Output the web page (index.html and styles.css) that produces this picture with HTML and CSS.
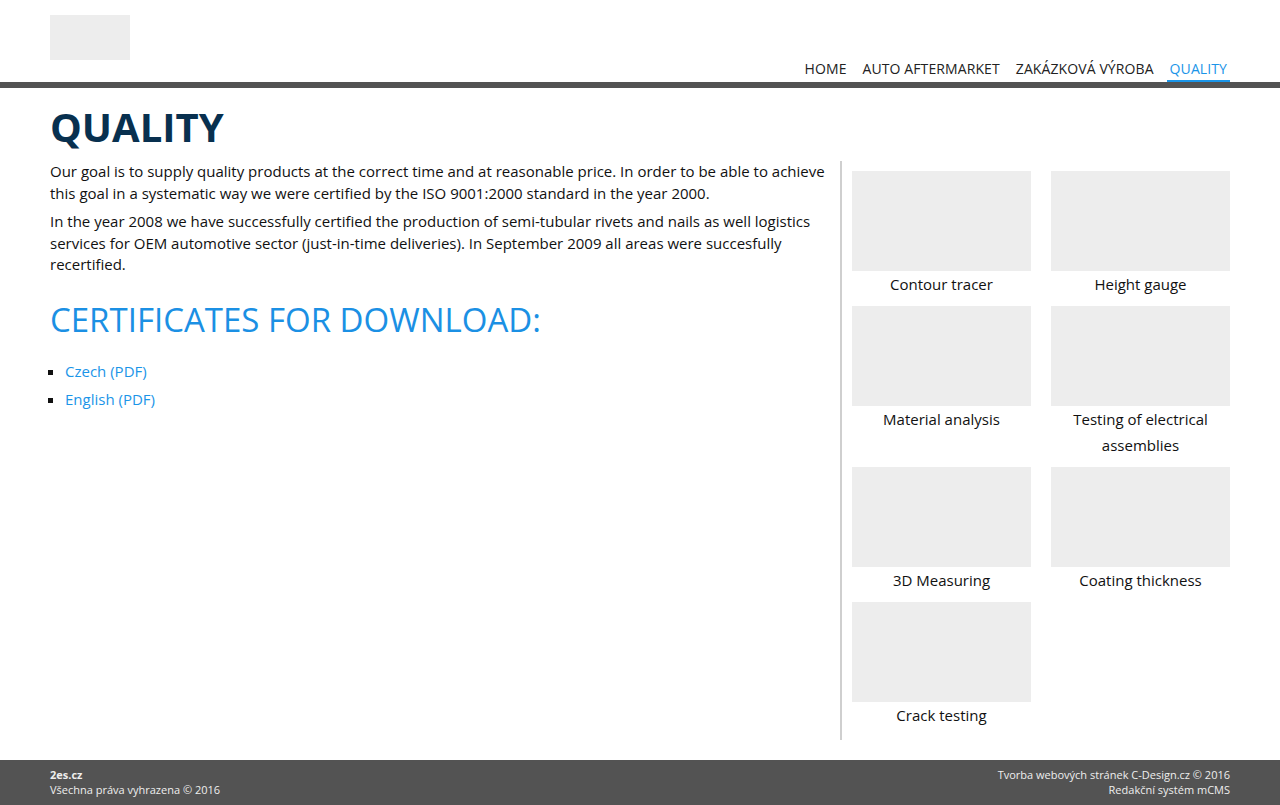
FILE: index.html
```html
<!DOCTYPE html>
<html lang="cs">
<head>
<meta charset="utf-8">
<title>Quality</title>
<link rel="stylesheet" href="styles.css">
</head>
<body>
<header class="header">
  <div class="wrap header-inner">
    <div class="logo"></div>
    <nav class="nav">
      <a href="#" class="nav-link">HOME</a>
      <a href="#" class="nav-link">AUTO AFTERMARKET</a>
      <a href="#" class="nav-link">ZAKÁZKOVÁ VÝROBA</a>
      <a href="#" class="nav-link active">QUALITY</a>
    </nav>
  </div>
</header>
<div class="bar"></div>
<main class="wrap">
  <h1 class="title">QUALITY</h1>
  <div class="content">
    <div class="main">
      <p class="text">Our goal is to supply quality products at the correct time and at reasonable price. In order to be able to achieve this goal in a systematic way we were certified by the ISO 9001:2000 standard in the year 2000.</p>
      <p class="text">In the year 2008 we have successfully certified the production of semi-tubular rivets and nails as well logistics services for OEM automotive sector (just-in-time deliveries). In September 2009 all areas were succesfully recertified.</p>
      <h2 class="subtitle">CERTIFICATES FOR DOWNLOAD:</h2>
      <ul class="downloads">
        <li><a href="#">Czech (PDF)</a></li>
        <li><a href="#">English (PDF)</a></li>
      </ul>
    </div>
    <aside class="side">
      <div class="gallery">
        <figure class="item"><div class="thumb"></div><figcaption>Contour tracer</figcaption></figure>
        <figure class="item"><div class="thumb"></div><figcaption>Height gauge</figcaption></figure>
        <figure class="item"><div class="thumb"></div><figcaption>Material analysis</figcaption></figure>
        <figure class="item"><div class="thumb"></div><figcaption>Testing of electrical assemblies</figcaption></figure>
        <figure class="item"><div class="thumb"></div><figcaption>3D Measuring</figcaption></figure>
        <figure class="item"><div class="thumb"></div><figcaption>Coating thickness</figcaption></figure>
        <figure class="item"><div class="thumb"></div><figcaption>Crack testing</figcaption></figure>
      </div>
    </aside>
  </div>
</main>
<footer class="footer">
  <div class="wrap footer-inner">
    <div class="footer-left">
      <strong>2es.cz</strong><br>
      Všechna práva vyhrazena © 2016
    </div>
    <div class="footer-right">
      Tvorba webových stránek C-Design.cz © 2016<br>
      Redakční systém mCMS
    </div>
  </div>
</footer>
</body>
</html>
```

FILE: styles.css
```css
html, body {
  margin: 0;
  padding: 0;
  background: #fff;
}
body {
  font-family: "Open Sans", "Noto Sans", sans-serif;
  color: #111;
  font-size: 15px;
}
.wrap {
  width: 1180px;
  margin: 0 auto;
}
.header-inner {
  display: flex;
  justify-content: space-between;
  align-items: flex-end;
  height: 82px;
  box-sizing: border-box;
  padding-top: 15px;
}
.logo {
  align-self: flex-start;
  width: 80px;
  height: 45px;
  background: #ededed;
}
.nav {
  display: flex;
  gap: 10px;
}
.nav-link {
  display: block;
  font-size: 14px;
  line-height: 20px;
  letter-spacing: 0.1px;
  padding: 0 3px 1px;
  border-bottom: 2px solid transparent;
  color: #222;
  text-decoration: none;
}
.nav-link.active {
  color: #1b95e8;
  border-bottom-color: #1b95e8;
}
.bar {
  height: 6px;
  background: #535353;
}
.title {
  margin: 15px 0 10px;
  font-size: 40px;
  line-height: 48px;
  font-weight: 700;
  color: #08304f;
}
.content {
  display: flex;
  align-items: stretch;
}
.main {
  flex: 0 0 790px;
  box-sizing: border-box;
  padding-right: 5px;
}
.text {
  margin: 0 0 7px;
  line-height: 21.6px;
}
.subtitle {
  margin: 23px 0 19px;
  font-size: 33px;
  line-height: 42px;
  font-weight: 400;
  color: #1b90e4;
}
.downloads {
  margin: 0;
  padding-left: 15px;
  list-style: square;
}
.downloads li {
  line-height: 22px;
  margin-bottom: 6px;
}
.downloads a {
  color: #1b95e8;
  text-decoration: none;
}
.side {
  flex: 1;
  border-left: 2px solid #cfcfcf;
  padding: 10px 0 11px 10px;
}
.gallery {
  display: grid;
  grid-template-columns: 179px 179px;
  column-gap: 20px;
  row-gap: 8.5px;
}
.item {
  margin: 0;
}
.thumb {
  height: 100px;
  background: #ededed;
}
.item figcaption {
  text-align: center;
  line-height: 26px;
  padding-bottom: 0.5px;
  color: #111;
}
.footer {
  margin-top: 20px;
  background: #535353;
  color: #eee;
  font-size: 11px;
  line-height: 15px;
}
.footer-inner {
  display: flex;
  justify-content: space-between;
  padding: 7px 0 8px;
}
.footer-right {
  text-align: right;
}
```
